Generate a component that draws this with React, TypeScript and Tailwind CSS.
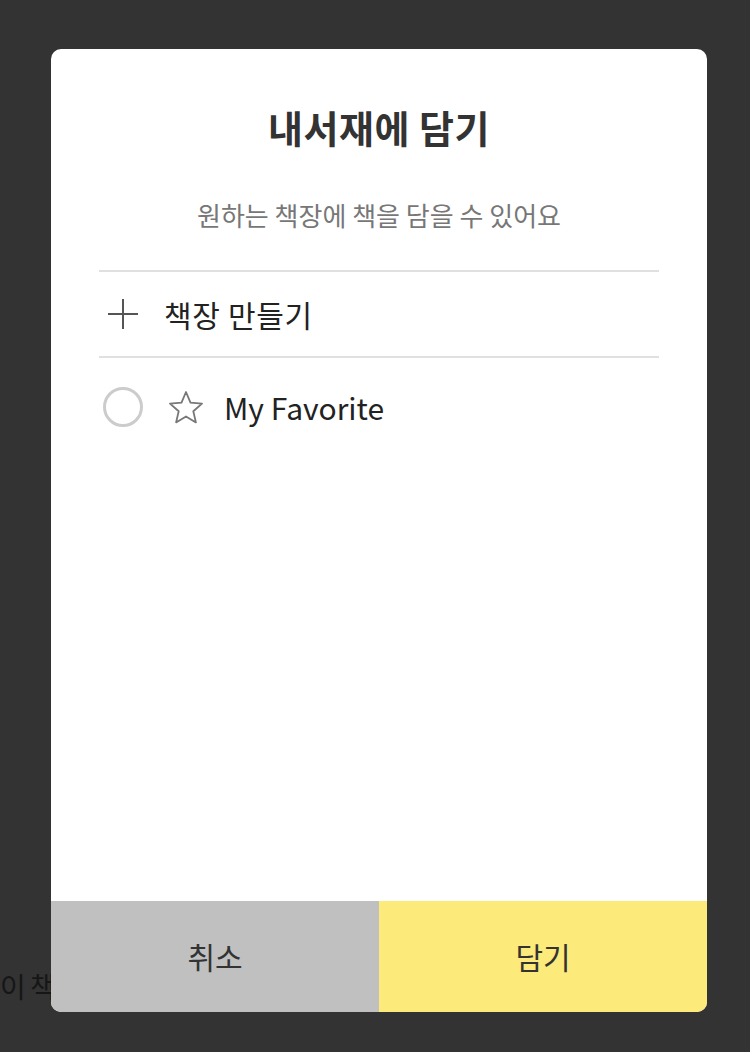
export default function App() {
  return (
    <div
      className="relative h-[1052px] w-[750px] overflow-hidden bg-[#333333]"
      style={{ fontFamily: '"Noto Sans CJK KR", "Noto Sans", sans-serif' }}
    >
      {/* page behind the overlay */}
      <div className="pt-[966px] text-[28px] leading-[40px] tracking-[-1px] text-[#161616]">이 책</div>

      {/* dialog */}
      <div className="absolute inset-0 pl-[51px] pt-[49px]">
        <div className="flex h-[963px] w-[656px] flex-col overflow-hidden rounded-[10px] bg-white">
          <div className="flex flex-1 flex-col px-[48px]">
            <h1 className="pt-[52px] text-center text-[38px] font-bold leading-[52px] tracking-[0.5px] text-[#333]">
              내서재에 담기
            </h1>
            <p className="mt-[45px] text-center text-[26px] leading-[34px] text-[#777]">
              원하는 책장에 책을 담을 수 있어요
            </p>

            <div className="mt-[38px] flex h-[88px] items-center border-y-2 border-[#e0e0e0]">
              <svg width="30" height="30" viewBox="0 0 30 30" className="ml-[9px]">
                <path d="M15 0v30M0 15h30" stroke="#555" strokeWidth="2" />
              </svg>
              <span className="ml-[26px] text-[30px] leading-[40px] tracking-[0.7px] text-[#222]">책장 만들기</span>
            </div>

            <div className="flex h-[98px] items-center">
              <div className="ml-[4px] h-[40px] w-[40px] rounded-full border-[3px] border-[#cccccc]" />
              <svg width="36" height="34" viewBox="0 0 36 34" className="ml-[25px]">
                <path
                  d="M18 2l4.5 10.6 11.5 1-8.7 7.6 2.6 11.2L18 26.5l-9.9 5.9 2.6-11.2L2 13.6l11.5-1z"
                  fill="none"
                  stroke="#777"
                  strokeWidth="1.8"
                  strokeLinejoin="round"
                />
              </svg>
              <span className="ml-[20px] text-[30px] leading-[40px] text-[#222]">My Favorite</span>
            </div>
          </div>

          <div className="flex h-[111px]">
            <button className="flex-1 bg-[#c0c0c0] text-[30px] text-[#333]">취소</button>
            <button className="flex-1 bg-[#fcea7b] text-[30px] text-[#333]">담기</button>
          </div>
        </div>
      </div>
    </div>
  );
}
